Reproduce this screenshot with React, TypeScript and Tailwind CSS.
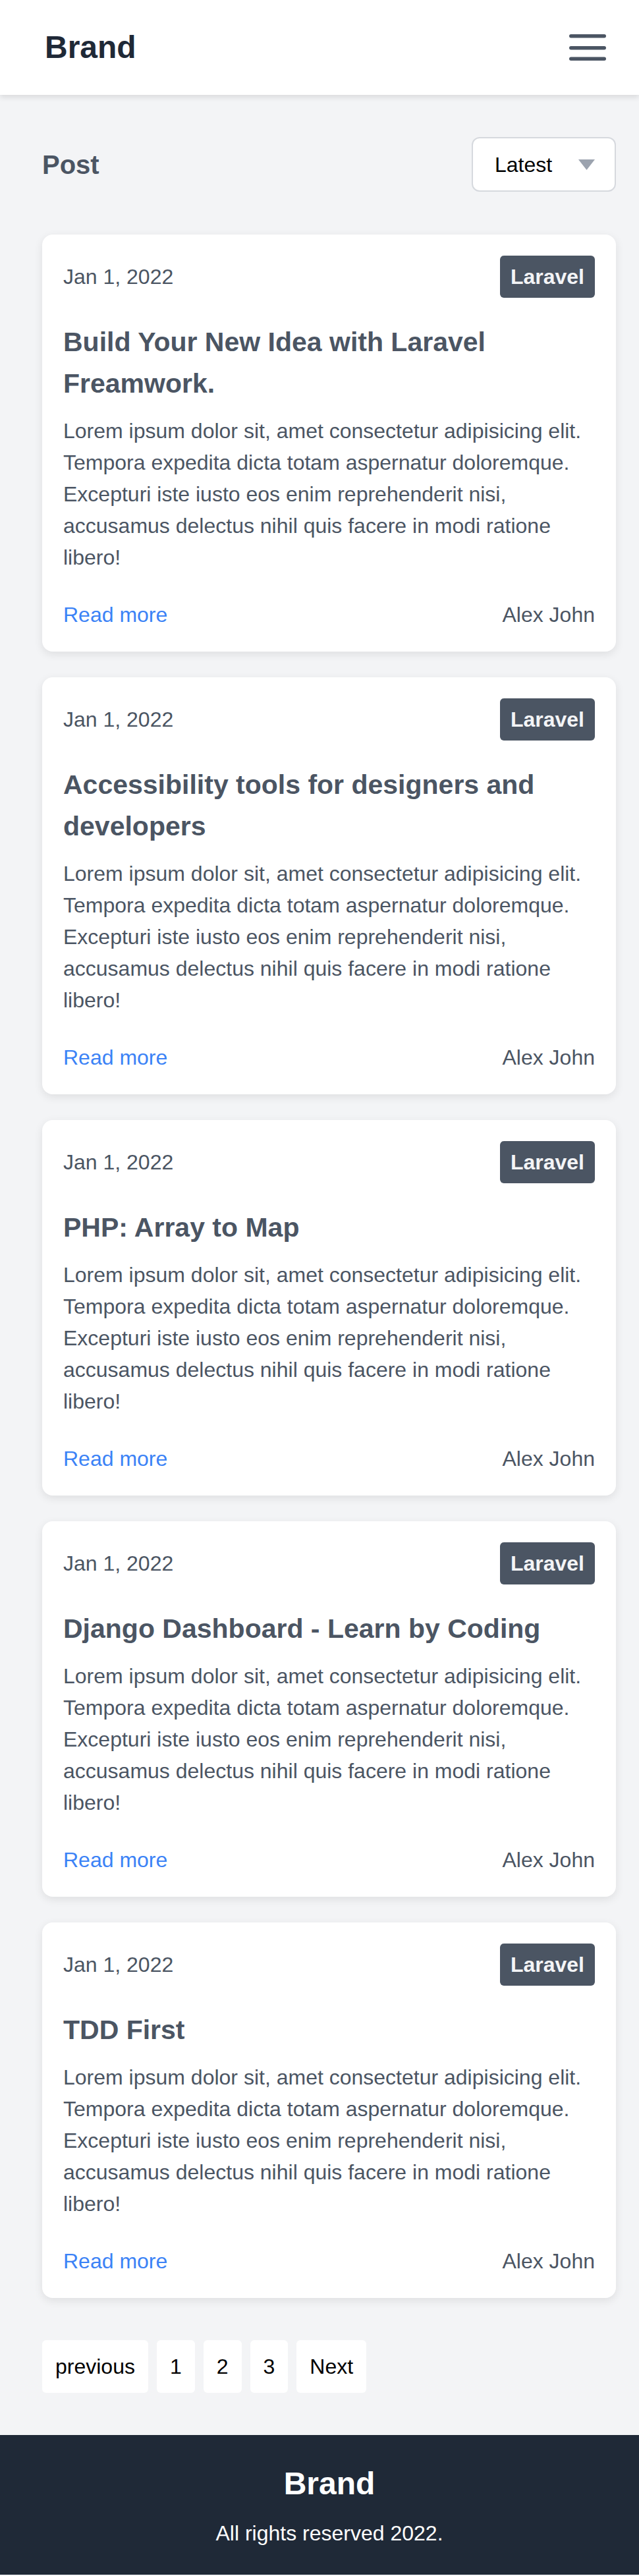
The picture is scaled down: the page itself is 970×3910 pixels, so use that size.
const posts = [
  { title: "Build Your New Idea with Laravel Freamwork." },
  { title: "Accessibility tools for designers and developers" },
  { title: "PHP: Array to Map" },
  { title: "Django Dashboard - Learn by Coding" },
  { title: "TDD First" },
];

const excerpt =
  "Lorem ipsum dolor sit, amet consectetur adipisicing elit. Tempora expedita dicta totam aspernatur doloremque. Excepturi iste iusto eos enim reprehenderit nisi, accusamus delectus nihil quis facere in modi ratione libero!";

function PostCard({ title }: { title: string }) {
  return (
    <article className="rounded-[16px] bg-white p-[32px] shadow-[0_4px_14px_rgba(0,0,0,0.09)]">
      <div className="flex items-center justify-between">
        <span className="text-[32px] leading-[48px] font-light text-[#4b5563]">Jan 1, 2022</span>
        <span className="rounded-[6px] bg-[#4b5563] px-[16px] py-[8px] text-[32px] leading-[48px] font-bold text-[#f3f4f6]">
          Laravel
        </span>
      </div>
      <h2 className="mt-[36px] text-[41px] leading-[63px] font-bold text-[#4b5563]">{title}</h2>
      <p className="mt-[16px] text-[32px] leading-[48px] text-[#4b5563]">{excerpt}</p>
      <div className="mt-[39px] flex items-center justify-between text-[32px] leading-[48px]">
        <a className="text-[#3b82f6]">Read more</a>
        <span className="text-[#4b5563]">Alex John</span>
      </div>
    </article>
  );
}

export default function App() {
  return (
    <div className="min-h-[3910px] bg-[#f3f4f6] font-['Liberation_Sans',Arial,sans-serif]">
      <header className="flex items-center justify-between bg-white py-[40px] pl-[68px] pr-[50px] shadow-[0_4px_8px_rgba(0,0,0,0.1)]">
        <span className="text-[48px] leading-[64px] font-bold text-[#1f2937]">Brand</span>
        <svg width="56" height="40" viewBox="0 0 56 40" className="text-[#4b5563]">
          <rect x="0" y="0" width="56" height="5.5" rx="2.75" fill="currentColor" />
          <rect x="0" y="18" width="56" height="5.5" rx="2.75" fill="currentColor" />
          <rect x="0" y="34.5" width="56" height="5.5" rx="2.75" fill="currentColor" />
        </svg>
      </header>

      <main className="pl-[64px] pr-[35px] pt-[64px]">
        <div className="flex items-center justify-between">
          <h1 className="text-[40px] leading-[56px] font-bold text-[#4b5563]">Post</h1>
          <div className="flex h-[83px] w-[219px] items-center justify-between rounded-[12px] border-2 border-[#d6d9de] bg-white pl-[33px] pr-[30px]">
            <span className="text-[32px] leading-[48px] text-black">Latest</span>
            <svg width="25" height="16" viewBox="0 0 25 16">
              <polygon points="0,0 25,0 12.5,16" fill="#9ca3af" />
            </svg>
          </div>
        </div>

        <div className="mt-[65px] flex flex-col gap-[39px]">
          {posts.map((p) => (
            <PostCard key={p.title} title={p.title} />
          ))}
        </div>

        <nav className="mt-[64px] flex gap-[13px] pb-[64px]">
          {["previous", "1", "2", "3", "Next"].map((label) => (
            <a
              key={label}
              className="rounded-[6px] bg-white px-[20px] py-[16px] text-[32px] leading-[48px] text-black"
            >
              {label}
            </a>
          ))}
        </nav>
      </main>

      <footer className="flex flex-col items-center bg-[#1f2937] pl-[30px] pt-[42px] pb-[39px] text-white">
        <span className="text-[48px] leading-[64px] font-bold">Brand</span>
        <p className="mt-[19px] text-[32px] leading-[48px]">All rights reserved 2022.</p>
      </footer>
    </div>
  );
}
